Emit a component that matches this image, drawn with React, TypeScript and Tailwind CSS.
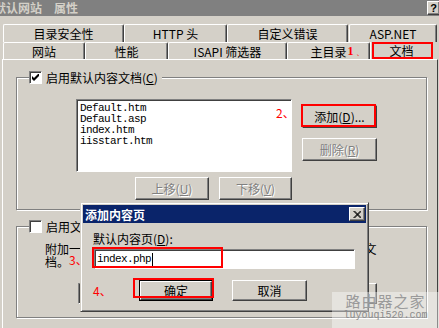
import React from 'react';

const raised =
  'border border-t-white border-l-white border-r-[#404040] border-b-[#404040] shadow-[inset_-1px_-1px_0_#808080]';
const sunken =
  'border border-t-[#808080] border-l-[#808080] border-r-white border-b-white shadow-[inset_1px_1px_0_#404040]';
const etched = 'border border-[#808080] shadow-[inset_1px_1px_0_#fff,1px_1px_0_#fff]';
const mono = "font-['Liberation_Mono',monospace] text-[11px] tracking-[-0.6px]";

type BtnProps = { children: React.ReactNode; className?: string; disabled?: boolean };

const Btn: React.FC<BtnProps> = ({ children, className = '', disabled = false }) => (
  <div
    className={`${raised} bg-[#d4d0c8] flex items-center justify-center text-[12px] leading-[13px] ${
      disabled ? 'text-[#808080] [text-shadow:1px_1px_0_#fff]' : 'text-black'
    } ${className}`}
  >
    {children}
  </div>
);

const Check: React.FC<{ checked?: boolean }> = ({ checked }) => (
  <div className={`${sunken} w-[13px] h-[13px] bg-white flex items-center justify-center shrink-0`}>
    {checked && (
      <svg width="7" height="7" viewBox="0 0 7 7">
        <polygon points="0,2 2,4 7,-1 7,2 2,7 0,5" fill="black" />
      </svg>
    )}
  </div>
);

const Tab: React.FC<{ w: string; children: React.ReactNode }> = ({ w, children }) => (
  <div
    className={`${w} h-full border-t border-l border-r border-t-white border-l-white border-r-[#404040] shadow-[inset_-1px_0_0_#808080] rounded-t-[2px] flex items-center justify-center text-[12px] leading-[13px]`}
  >
    {children}
  </div>
);

const App: React.FC = () => {
  const docs = ['Default.htm', 'Default.asp', 'index.htm', 'iisstart.htm'];

  return (
    <div className="relative w-[439px] h-[328px] overflow-hidden bg-[#d4d0c8] font-['Noto_Sans_CJK_SC',sans-serif] text-[12px] leading-[13px] text-black flex flex-col">
      {/* title bar */}
      <div className="h-[16px] shrink-0 bg-[#808080] flex items-start">
        <span className="ml-[-6px] mt-[2px] font-bold text-[#d4d0c8] leading-[12px] whitespace-nowrap">
          默认网站<span className="ml-[12px]">属性</span>
        </span>
        <div
          className={`ml-auto mr-[-1px] mt-[1px] w-[13px] h-[14px] ${raised} bg-[#d4d0c8] flex items-center justify-center font-['Liberation_Sans',sans-serif] font-bold text-[11px]`}
        >
          ?
        </div>
      </div>

      {/* tabs */}
      <div className="mt-[8px] h-[18px] shrink-0 flex pl-[3px]">
        <Tab w="w-[121px]">目录安全性</Tab>
        <Tab w="w-[103px]">HTTP 头</Tab>
        <Tab w="w-[121px]">自定义错误</Tab>
        <Tab w="w-[88px] ml-[1px]">ASP.NET</Tab>
      </div>
      <div className="h-[17px] shrink-0 flex pl-[3px]">
        <Tab w="w-[82px]">网站</Tab>
        <Tab w="w-[83px]">性能</Tab>
        <Tab w="w-[119px]">ISAPI 筛选器</Tab>
        <Tab w="w-[83px]">
          <span className="relative">
            主目录
            <span className="absolute left-full top-0 ml-[1px] text-[#ff0000] font-['Liberation_Serif',serif] font-bold whitespace-nowrap">
              1<span className="font-normal text-[9px] ml-[2px]">、</span>
            </span>
          </span>
        </Tab>
        <div className="relative w-[62px] h-full border-l border-l-white flex items-center justify-center">
          文档
          <div className="absolute left-[1px] top-0 w-[61px] h-[17px] border-2 border-[#ff0000]" />
        </div>
      </div>

      {/* panel */}
      <div className="ml-[2px] w-[436px] flex-1 border-t border-l border-r border-t-white border-l-white border-r-[#404040] pl-[13px] pt-[17px]">
        {/* default documents group */}
        <div className={`w-[411px] h-[133px] ${etched}`}>
          <div className="-mt-[7px] ml-[12px] w-fit h-[13px] bg-[#d4d0c8] pr-[4px] flex items-center">
            <Check checked />
            <span className="ml-[4px]">
              启用默认内容文档(<u>C</u>)
            </span>
          </div>
          <div className="flex mt-[15px] ml-[59px]">
            <div className="flex flex-col">
              <div className={`${sunken} relative w-[216px] h-[73px] bg-white pl-[3px] pt-[3px]`}>
                {docs.map((d) => (
                  <div key={d} className={`${mono} leading-[11px]`}>
                    {d}
                  </div>
                ))}
                <span className="absolute left-[199px] top-[6px] text-[#ff0000] whitespace-nowrap">2、</span>
              </div>
              <div className="flex justify-end gap-[10px] mt-[5px]">
                <Btn className="w-[74px] h-[23px]" disabled>
                  上移(<u>U</u>)
                </Btn>
                <Btn className="w-[73px] h-[23px]" disabled>
                  下移(<u>V</u>)
                </Btn>
              </div>
            </div>
            <div className="flex flex-col ml-[10px] mt-[6px] gap-[10px]">
              <div className="relative">
                <Btn className="w-[75px] h-[23px]">
                  添加(<u>D</u>)...
                </Btn>
                <div className="absolute -left-[1px] -top-[1px] w-[75px] h-[23px] border-2 border-[#ff0000]" />
              </div>
              <Btn className="w-[75px] h-[23px]" disabled>
                删除(<u>R</u>)
              </Btn>
            </div>
          </div>
        </div>

        {/* footer group */}
        <div className={`mt-[16px] w-[411px] h-[92px] ${etched}`}>
          <div className="-mt-[7px] ml-[12px] w-fit h-[13px] bg-[#d4d0c8] pr-[4px] flex items-center">
            <Check />
            <span className="ml-[4px]">
              启用文档页脚(<u>O</u>)
            </span>
          </div>
          <p className="relative ml-[28px] mt-[9px] whitespace-nowrap">
            附加一个 HTML 格式的页脚到您的 Web 服务器返回的每一个文
            <br />
            档。
            <span className="absolute left-[24px] top-[11px] text-[#ff0000]">3、</span>
          </p>
          <div className="flex mt-[15px] ml-[61px]">
            <div className={`${sunken} w-[214px] h-[21px] bg-white`} />
            <Btn className="ml-[10px] w-[75px] h-[21px]">
              浏览(<u>B</u>)...
            </Btn>
          </div>
        </div>
      </div>

      {/* add content page dialog */}
      <div className="absolute left-[80px] top-[202px] w-[289px] h-[110px] bg-[#d4d0c8] border border-t-[#d4d0c8] border-l-[#d4d0c8] border-r-[#404040] border-b-[#404040] shadow-[inset_1px_1px_0_#fff,inset_-1px_-1px_0_#808080] p-[2px] flex flex-col">
        <div className="h-[18px] shrink-0 bg-[#0a246a] flex items-center pl-[2px] pr-[1px]">
          <span className="font-bold text-white">添加内容页</span>
          <div
            className={`ml-auto w-[16px] h-[14px] ${raised} bg-[#d4d0c8] flex items-center justify-center`}
          >
            <svg width="8" height="7" viewBox="0 0 8 7">
              <path d="M0.5 0 L7.5 7 M1.5 0 L8.5 7 M7.5 0 L0.5 7 M8.5 0 L1.5 7" stroke="black" strokeWidth="1" />
            </svg>
          </div>
        </div>
        <div className="pl-[10px] pt-[9px]">
          <div>
            默认内容页(<u>D</u>):
          </div>
          <div className="relative mt-[4px] ml-[1px] w-[261px] h-[20px]">
            <div className={`${sunken} w-full h-full bg-white flex items-center pl-[2px]`}>
              <span className={mono}>index.php</span>
              <span className="ml-[1px] w-[1px] h-[13px] bg-black" />
            </div>
            <div className="absolute -left-[2px] -top-[2px] w-[131px] h-[21px] border-2 border-[#ff0000]" />
          </div>
          <div className="flex items-center mt-[11px]">
            <span className="w-[46px] text-[#ff0000]">4、</span>
            <div className="relative">
              <div className="w-[74px] h-[21px] border border-black">
                <Btn className="w-full h-full">确定</Btn>
              </div>
              <div className="absolute -left-[6px] -top-[2px] w-[81px] h-[20px] border-2 border-[#ff0000]" />
            </div>
            <Btn className="ml-[19px] w-[75px] h-[21px]">取消</Btn>
          </div>
        </div>
      </div>

      {/* watermark */}
      <div className="absolute right-0 bottom-0 w-[107px] h-[36px] bg-white/40 flex flex-col items-center pt-[1px]">
        <span className="text-[15px] leading-[16px] tracking-[1px] text-[#9a9a9a]">路由器之家</span>
        <span className="font-['Liberation_Mono',monospace] text-[10px] leading-[12px] text-[#8a8a8a] mt-[1px]">
          luyouqi520.com
        </span>
      </div>
    </div>
  );
};

export default App;
